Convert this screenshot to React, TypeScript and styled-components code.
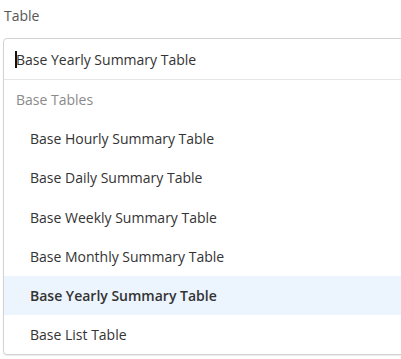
import React from "react";
import styled, { createGlobalStyle } from "styled-components";

const Global = createGlobalStyle`
  html, body { margin: 0; padding: 0; background: #fff; }
  body { font-family: "Open Sans", "Noto Sans", sans-serif; overflow: hidden; }
`;

const Page = styled.div`
  width: 401px;
  height: 359px;
  overflow: hidden;
  padding-left: 3px;
  box-sizing: border-box;
`;

const Label = styled.div`
  height: 38px;
  padding-left: 1px;
  padding-top: 6px;
  box-sizing: border-box;
  font-size: 14px;
  line-height: 20px;
  color: #555;
`;

const Combo = styled.div`
  width: 440px;
  border: 1px solid #d2d2d2;
  border-radius: 4px 0 0 4px;
  box-shadow: 0 1px 1px rgba(0, 0, 0, 0.08);
  background: #fff;
`;

const InputRow = styled.div`
  height: 41px;
  display: flex;
  align-items: center;
  padding-left: 11px;
  border-bottom: 1px solid #e6e6e6;
  box-sizing: border-box;
  font-size: 14px;
  color: #333;
`;

const Caret = styled.span`
  display: inline-block;
  width: 2px;
  height: 17px;
  background: #111;
  margin-right: -1px;
`;

const List = styled.div`
  display: flex;
  flex-direction: column;
`;

const Row = styled.div<{ $header?: boolean; $active?: boolean }>`
  height: 39.2px;
  display: flex;
  align-items: center;
  padding-left: ${(p) => (p.$header ? "12px" : "26px")};
  font-size: 14px;
  font-weight: ${(p) => (p.$active ? 600 : 400)};
  color: ${(p) => (p.$header ? "#8a8a8a" : "#333")};
  background: ${(p) => (p.$active ? "#ecf4fe" : "transparent")};
`;

const items = [
  "Base Hourly Summary Table",
  "Base Daily Summary Table",
  "Base Weekly Summary Table",
  "Base Monthly Summary Table",
  "Base Yearly Summary Table",
  "Base List Table",
];

export default function App() {
  return (
    <>
      <Global />
      <Page>
        <Label>Table</Label>
        <Combo>
          <InputRow>
            <Caret />
            Base Yearly Summary Table
          </InputRow>
          <List>
            <Row $header>Base Tables</Row>
            {items.map((it) => (
              <Row key={it} $active={it === "Base Yearly Summary Table"}>
                {it}
              </Row>
            ))}
          </List>
        </Combo>
      </Page>
    </>
  );
}
